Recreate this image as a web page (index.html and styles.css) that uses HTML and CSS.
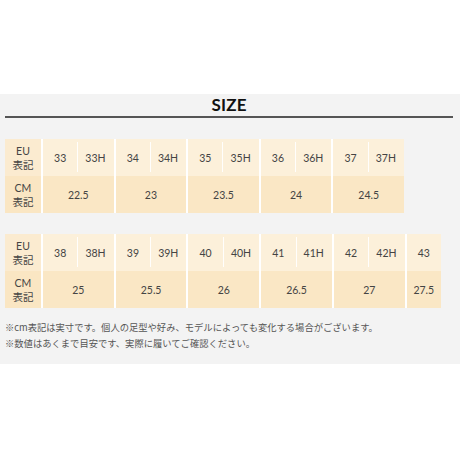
FILE: index.html
```html
<!DOCTYPE html>
<html lang="ja">
<head>
<meta charset="utf-8">
<link rel="stylesheet" href="styles.css">
</head>
<body>
<div class="panel">
  <h2 class="title">SIZE</h2>
  <div class="grid g10">
    <div class="hd r1">EU<br>表記</div>
    <div class="c r1 ps">33</div><div class="c r1 pe">33H</div>
    <div class="c r1 ps">34</div><div class="c r1 pe">34H</div>
    <div class="c r1 ps">35</div><div class="c r1 pe">35H</div>
    <div class="c r1 ps">36</div><div class="c r1 pe">36H</div>
    <div class="c r1 ps">37</div><div class="c r1 pe">37H</div>
    <div class="hd r2">CM<br>表記</div>
    <div class="c r2 span2">22.5</div>
    <div class="c r2 span2">23</div>
    <div class="c r2 span2">23.5</div>
    <div class="c r2 span2">24</div>
    <div class="c r2 span2">24.5</div>
  </div>
  <div class="grid g11">
    <div class="hd r1">EU<br>表記</div>
    <div class="c r1 ps">38</div><div class="c r1 pe">38H</div>
    <div class="c r1 ps">39</div><div class="c r1 pe">39H</div>
    <div class="c r1 ps">40</div><div class="c r1 pe">40H</div>
    <div class="c r1 ps">41</div><div class="c r1 pe">41H</div>
    <div class="c r1 ps">42</div><div class="c r1 pe">42H</div>
    <div class="c r1 ps">43</div>
    <div class="hd r2">CM<br>表記</div>
    <div class="c r2 span2">25</div>
    <div class="c r2 span2">25.5</div>
    <div class="c r2 span2">26</div>
    <div class="c r2 span2">26.5</div>
    <div class="c r2 span2">27</div>
    <div class="c r2">27.5</div>
  </div>
  <p class="note">※cm表記は実寸です。個人の足型や好み、モデルによっても変化する場合がございます。<br>※数値はあくまで目安です、実際に履いてご確認ください。</p>
</div>
</body>
</html>
```
FILE: styles.css
```css
html, body {
  margin: 0;
  padding: 0;
  background: #ffffff;
}
body {
  font-family: Lato, "Noto Sans CJK JP", sans-serif;
  color: #444;
}
.panel {
  margin-top: 94px;
  background: #f3f3f3;
  padding: 0 0 13px 0;
}
.title {
  margin: 0 7px 0 5px;
  height: 22px;
  line-height: 22px;
  font-size: 17px;
  font-weight: 700;
  text-align: center;
  color: #111;
  border-bottom: 2px solid #555;
  letter-spacing: 0.2px;
}
.grid {
  display: grid;
  grid-template-rows: 37px 37px;
  margin-left: 5px;
  margin-top: 21px;
}
.g10 {
  width: 399px;
  grid-template-columns: 36px repeat(10, 1fr);
}
.g11 {
  width: 436px;
  grid-template-columns: 36px repeat(11, 1fr);
}
.hd, .c {
  display: flex;
  align-items: center;
  justify-content: center;
  text-align: center;
  font-size: 10.5px;
  line-height: 14px;
  box-sizing: border-box;
  position: relative;
}
.hd.r1 { background: #fbebd0; }
.hd.r2 { background: #fae6c3; }
.c.r1 { background: #fcf0da; }
.c.r2 { background: #fae7c5; }
.ps, .r2.c {
  border-left: 2px solid #ffffff;
}
.pe::before {
  content: "";
  position: absolute;
  left: 0;
  top: 3px;
  bottom: 4px;
  width: 1px;
  background: rgba(255, 255, 255, 0.9);
}
.span2 {
  grid-column: span 2;
}
.note {
  margin: 11px 0 0 5px;
  font-family: "Noto Sans CJK JP", sans-serif;
  font-size: 9.3px;
  line-height: 16px;
  color: #555;
}
```
